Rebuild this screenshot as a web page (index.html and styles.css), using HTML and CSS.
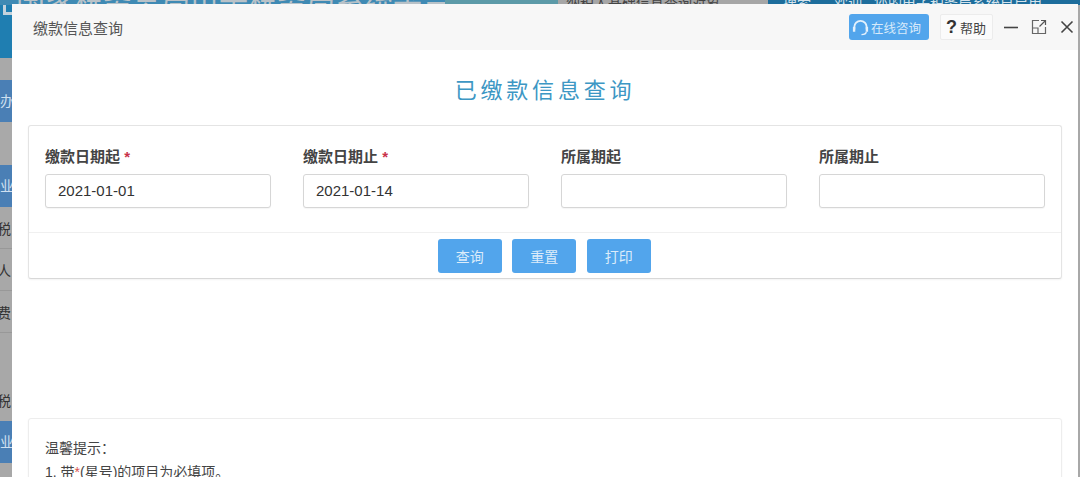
FILE: index.html
```html
<!DOCTYPE html>
<html lang="zh-CN">
<head>
<meta charset="utf-8">
<title>缴款信息查询</title>
<link rel="stylesheet" href="styles.css">
</head>
<body>
<div class="backdrop">
  <div class="bg-top">
    <div class="bg-top-a"><span>国家税务总局电子税务局系统平台</span></div>
    <div class="bg-top-b"></div>
    <div class="bg-top-c">纳税人基础信息查询对象</div>
    <div class="bg-top-d">搜索 &nbsp; &nbsp;&nbsp; 欢迎 &nbsp; 您的电子税务局系统已启用</div>
  </div>
  <div class="bg-side">
    <div class="side-blue side-logo"><i class="logo-mark"></i></div>
    <div class="side-grey h22"></div>
    <div class="side-blue h42"><span>办</span></div>
    <div class="side-grey h43"></div>
    <div class="side-blue h42"><span>业</span></div>
    <div class="side-row">税</div>
    <div class="side-row">人</div>
    <div class="side-row">费</div>
    <div class="side-gap"></div>
    <div class="side-row side-last">税</div>
    <div class="side-blue h42"><span>业</span></div>
  </div>
  <div class="bg-right"></div>
</div>

<div class="dialog">
  <header class="dialog-head">
    <h2 class="dialog-title">缴款信息查询</h2>
    <div class="head-tools">
      <button class="btn-online" type="button">
        <svg class="ic-head" viewBox="0 0 20 20" width="19" height="19" aria-hidden="true"><path d="M3.500 12V9.500a6.500 6.500 0 0 1 13 0V12" fill="none" stroke="#e4f1fc" stroke-width="2"/><path d="M2 9.500h2.500v5H2zM15.500 9.500H18v5h-2.500z" fill="#e4f1fc"/><path d="M16 14.500c0 2-2.500 3-5 3" fill="none" stroke="#e4f1fc" stroke-width="1.500"/></svg>
        <span>在线咨询</span>
      </button>
      <button class="btn-help" type="button"><b>?</b><span>帮助</span></button>
      <svg class="ic-win" viewBox="0 0 16 16" width="16" height="16" aria-hidden="true"><path d="M1 8.500h14" stroke="#444" stroke-width="1.600"/></svg>
      <svg class="ic-win" viewBox="0 0 16 16" width="16" height="16" aria-hidden="true"><path d="M8 1.500H1.500V14.500H14.500V8" fill="none" stroke="#666" stroke-width="1.200"/><path d="M1.500 9H7V14.500" fill="none" stroke="#666" stroke-width="1.200"/><path d="M10 1.500h4.500V6M14.500 1.500L8.500 7.500" fill="none" stroke="#555" stroke-width="1.200"/></svg>
      <svg class="ic-win" viewBox="0 0 16 16" width="16" height="16" aria-hidden="true"><path d="M2.500 2.500l11 11M13.500 2.500l-11 11" stroke="#444" stroke-width="1.600"/></svg>
    </div>
  </header>
  <main class="dialog-body">
    <h1 class="page-title">已缴款信息查询</h1>
    <section class="panel">
      <div class="form-grid">
        <label class="field"><span class="field-label">缴款日期起 <em>*</em></span><input class="field-input" type="text" value="2021-01-01"></label>
        <label class="field"><span class="field-label">缴款日期止 <em>*</em></span><input class="field-input" type="text" value="2021-01-14"></label>
        <label class="field"><span class="field-label">所属期起</span><input class="field-input" type="text"></label>
        <label class="field"><span class="field-label">所属期止</span><input class="field-input" type="text"></label>
      </div>
      <div class="actions">
        <button class="btn-primary" type="button">查询</button>
        <button class="btn-primary" type="button">重置</button>
        <button class="btn-primary" type="button">打印</button>
      </div>
    </section>
    <section class="panel tips">
      <p>温馨提示：</p>
      <p>1. 带<em>*</em>(星号)的项目为必填项。</p>
    </section>
  </main>
</div>
</body>
</html>
```
FILE: styles.css
```css
* { box-sizing: border-box; }
html, body { margin: 0; height: 100%; overflow: hidden; }
body {
  width: 1080px;
  height: 477px;
  position: relative;
  background: #a8a8a8;
  font-family: "Liberation Sans", "Noto Sans CJK SC", sans-serif;
  color: #333;
}
.backdrop { position: absolute; inset: 0; overflow: hidden; }
.bg-top { display: flex; height: 5px; overflow: hidden; font-size: 14px; line-height: 6px; }
.bg-top-a { width: 445px; background: #3f8ab4; color: #b9c2c8; overflow: hidden; white-space: nowrap; padding-left: 16px; }
.bg-top-a span { display: block; margin-top: -8px; font-size: 29px; line-height: 20px; font-weight: 400; }
.bg-top-b { width: 113px; background: #5c9aa8; }
.bg-top-c { width: 210px; background: #a6a6a6; color: #444; padding-left: 8px; white-space: nowrap; overflow: hidden; }
.bg-top-d { flex: 1; background: #1d6d9c; color: #d5e3ec; padding-left: 15px; white-space: nowrap; overflow: hidden; }
.bg-side { position: absolute; left: 0; top: 5px; width: 12px; display: flex; flex-direction: column; overflow: hidden; font-size: 14px; }
.side-blue { background: #4a7fb5; color: #cfe0f0; display: flex; align-items: center; }
.side-blue span { padding-bottom: 3px; }
.side-logo { height: 53px; background: #1f7eb1; align-items: flex-start; }
.logo-mark { display: block; width: 9px; height: 10px; margin-left: 3px; border-left: 3px solid #c3d2dc; border-bottom: 3px solid #c3d2dc; }
.h22 { height: 22px; }
.h42 { height: 42px; }
.h43 { height: 43px; }
.side-grey { background: #a9a9a9; }
.side-row { height: 42px; display: flex; align-items: center; color: #333; border-bottom: 1px solid #989898; margin-left: -3px; width: 15px; }
.side-gap { height: 45px; }
.side-last { border-bottom: 0; height: 43px; }
.bg-right { position: absolute; right: 0; top: 5px; width: 2px; height: 407px; background: #a8a8a8; }

.dialog {
  position: absolute;
  left: 12px;
  top: 4px;
  width: 1066px;
  height: 560px;
  background: #fff;
  display: flex;
  flex-direction: column;
}
.dialog-head {
  height: 46px;
  flex: none;
  background: #f7f7f7;
  display: flex;
  align-items: center;
  justify-content: space-between;
  padding: 0 3px 0 21px;
}
.dialog-title { margin: 0; font-size: 15px; font-weight: 400; color: #555; }
.head-tools { display: flex; align-items: center; }
.btn-online {
  width: 80px;
  height: 26px;
  border: 0;
  border-radius: 3px;
  padding: 0 0 0 2px;
  background: #52a5ec;
  color: #d8eafa;
  font: 12.500px "Liberation Sans", "Noto Sans CJK SC", sans-serif;
  display: flex;
  align-items: center;
  gap: 1px;
}
.ic-head { flex: none; }
.btn-help {
  width: 53px;
  height: 26px;
  margin-left: 11px;
  margin-right: 10px;
  border: 1px solid #ececec;
  border-radius: 2px;
  padding: 0 0 0 5px;
  background: #fbfbfb;
  color: #444;
  font: 13px "Liberation Sans", "Noto Sans CJK SC", sans-serif;
  display: flex;
  align-items: center;
  gap: 3px;
}
.btn-help b { font-size: 18px; color: #333; }
.ic-win { margin-left: 12px; flex: none; }
.ic-win:first-of-type { margin-left: 0; }

.dialog-body { padding: 0 16px; flex: 1; }
.page-title {
  margin: 0;
  height: 75px;
  padding-top: 25px;
  text-align: center;
  font-size: 22px;
  line-height: 32px;
  font-weight: 400;
  letter-spacing: 3.800px;
  color: #3d97c4;
}
.panel {
  border: 1px solid #e4e4e4;
  border-bottom-color: #d8d8d8;
  border-radius: 3px;
  background: #fff;
  height: 154px;
  box-shadow: 0 1px 2px rgba(0, 0, 0, .05);
}
.form-grid {
  display: grid;
  grid-template-columns: repeat(4, 226px);
  justify-content: space-between;
  padding: 20px 16px 0;
  height: 107px;
  border-bottom: 1px solid #f0f0f0;
}
.field { display: flex; flex-direction: column; }
.field-label { font-size: 15px; line-height: 22px; height: 28px; font-weight: 700; color: #444; }
.field-label em { font-style: normal; color: #c9324a; font-weight: 700; }
.field-input {
  width: 226px;
  height: 34px;
  border: 1px solid #d6d6d6;
  border-radius: 3px;
  padding: 0 12px 2px;
  background: #fff;
  font: 15px "Liberation Sans", "Noto Sans CJK SC", sans-serif;
  color: #333;
  box-shadow: 0 1px 1px rgba(0, 0, 0, .04);
}
.actions { display: flex; justify-content: center; gap: 10.500px; padding: 6px 1.500px 0 0; }
.btn-primary {
  width: 64px;
  height: 34px;
  border: 0;
  border-radius: 3px;
  background: #52a5ec;
  color: #dcecfa;
  font: 14px "Liberation Sans", "Noto Sans CJK SC", sans-serif;
}
.tips {
  margin-top: 139px;
  height: 120px;
  padding: 17px 16px;
  font-size: 14px;
  line-height: 24px;
  color: #444;
  border-color: #ededed;
}
.tips p { margin: 0; }
.tips em { font-style: normal; color: #d9534f; }
```
